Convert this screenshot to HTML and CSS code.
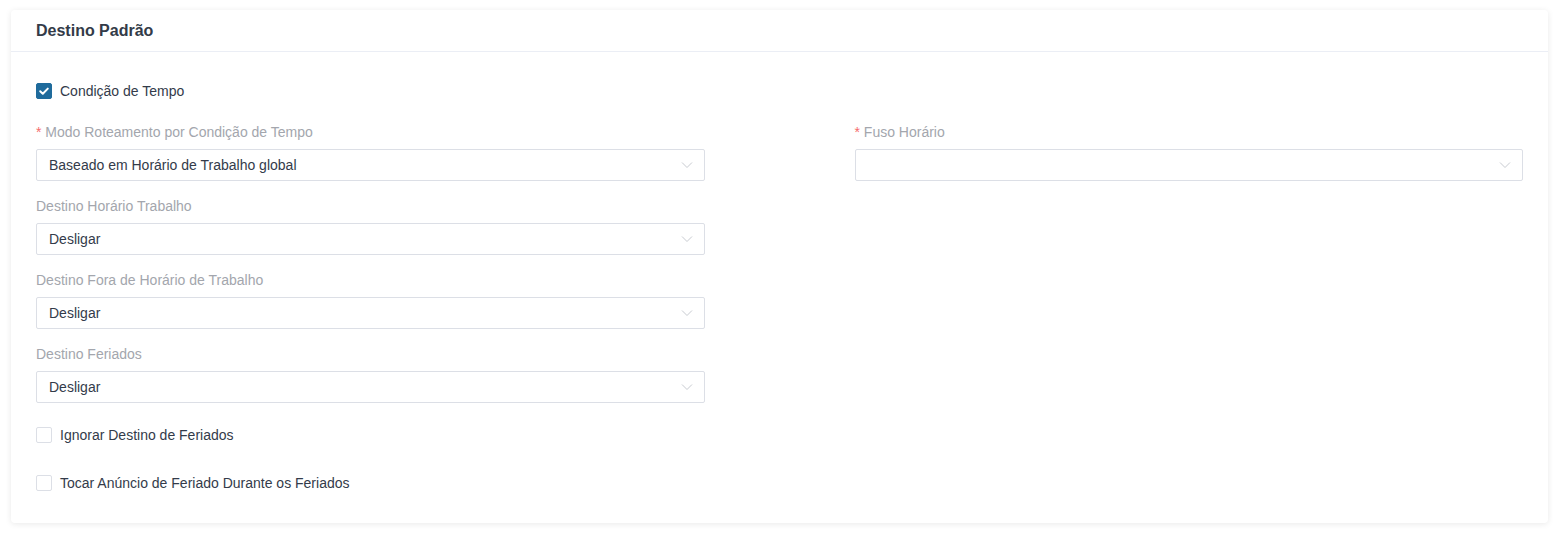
FILE: index.html
```html
<!DOCTYPE html>
<html lang="pt">
<head>
  <meta charset="UTF-8" />
  <title>Destino Padrão</title>
  <link rel="stylesheet" href="styles.css">
</head>
<body>

  <!-- Card -->
  <section class="card">
    <div class="card-header">Destino Padrão</div>

    <div class="card-body">
      <label class="check checked">
        <span class="box">
          <svg viewBox="0 0 16 16" width="16" height="16"><path d="M4.2 8.2l2.6 2.6 5-5.2" fill="none" stroke="#fff" stroke-width="2" stroke-linecap="round" stroke-linejoin="round"/></svg>
        </span>
        Condição de Tempo
      </label>

      <div class="form-grid">
        <div class="col">
          <div class="field">
            <div class="label"><span class="req">*</span> Modo Roteamento por Condição de Tempo</div>
            <div class="select">
              <span>Baseado em Horário de Trabalho global</span>
              <svg class="arrow" viewBox="0 0 12 8" width="12" height="8"><path d="M1 1.5l5 5 5-5" fill="none" stroke="#c8cbd1" stroke-width="1"/></svg>
            </div>
          </div>
          <div class="field">
            <div class="label">Destino Horário Trabalho</div>
            <div class="select">
              <span>Desligar</span>
              <svg class="arrow" viewBox="0 0 12 8" width="12" height="8"><path d="M1 1.5l5 5 5-5" fill="none" stroke="#c8cbd1" stroke-width="1"/></svg>
            </div>
          </div>
          <div class="field">
            <div class="label">Destino Fora de Horário de Trabalho</div>
            <div class="select">
              <span>Desligar</span>
              <svg class="arrow" viewBox="0 0 12 8" width="12" height="8"><path d="M1 1.5l5 5 5-5" fill="none" stroke="#c8cbd1" stroke-width="1"/></svg>
            </div>
          </div>
          <div class="field">
            <div class="label">Destino Feriados</div>
            <div class="select">
              <span>Desligar</span>
              <svg class="arrow" viewBox="0 0 12 8" width="12" height="8"><path d="M1 1.5l5 5 5-5" fill="none" stroke="#c8cbd1" stroke-width="1"/></svg>
            </div>
          </div>
        </div>

        <div class="col">
          <div class="field">
            <div class="label"><span class="req">*</span> Fuso Horário</div>
            <div class="select">
              <span></span>
              <svg class="arrow" viewBox="0 0 12 8" width="12" height="8"><path d="M1 1.5l5 5 5-5" fill="none" stroke="#c8cbd1" stroke-width="1"/></svg>
            </div>
          </div>
        </div>
      </div>

      <label class="check">
        <span class="box"></span>
        Ignorar Destino de Feriados
      </label>
      <label class="check">
        <span class="box"></span>
        Tocar Anúncio de Feriado Durante os Feriados
      </label>
    </div>
  </section>

</body>
</html>
```

FILE: styles.css
```css
* {
  box-sizing: border-box;
}
body {
  margin: 0;
  padding: 10px 11px 12px;
  background: #fff;
  font-family: "Liberation Sans", Arial, sans-serif;
  font-size: 14px;
  color: #333b4a;
}

/* Card */
.card {
  background: #fff;
  border-radius: 4px;
  box-shadow: 0 1px 6px rgba(0, 0, 0, 0.09);
}

.card-header {
  height: 42px;
  padding: 0 25px;
  line-height: 41px;
  font-size: 16px;
  font-weight: bold;
  color: #333b48;
  border-bottom: 1px solid #ebeef5;
}

.card-body {
  padding: 30px 25px 31px;
}

/* Checkboxes */
.check {
  display: flex;
  align-items: center;
  height: 18px;
  color: #333b4a;
}

.check .box {
  width: 16px;
  height: 16px;
  margin-right: 8px;
  border: 1px solid #dcdfe6;
  border-radius: 2px;
  background: #fff;
  display: flex;
}

.check.checked .box {
  background: #1f6b9c;
  border-color: #1f6b9c;
}

.check.checked .box svg {
  margin: -1px;
}

.check + .check {
  margin-top: 30px;
}

/* Form grid */
.form-grid {
  display: grid;
  grid-template-columns: 1fr 1fr;
  column-gap: 150px;
  margin-top: 21px;
  margin-bottom: 23px;
}

.field + .field {
  margin-top: 14px;
}

.label {
  line-height: 22px;
  margin-bottom: 6px;
  color: #a3a6ad;
}

.req {
  color: #f56c6c;
}

.select {
  height: 32px;
  display: flex;
  align-items: center;
  justify-content: space-between;
  padding: 0 12px;
  border: 1px solid #dcdfe6;
  border-radius: 2px;
  color: #333b4a;
}

.select .arrow {
  margin-right: -1px;
}
```
